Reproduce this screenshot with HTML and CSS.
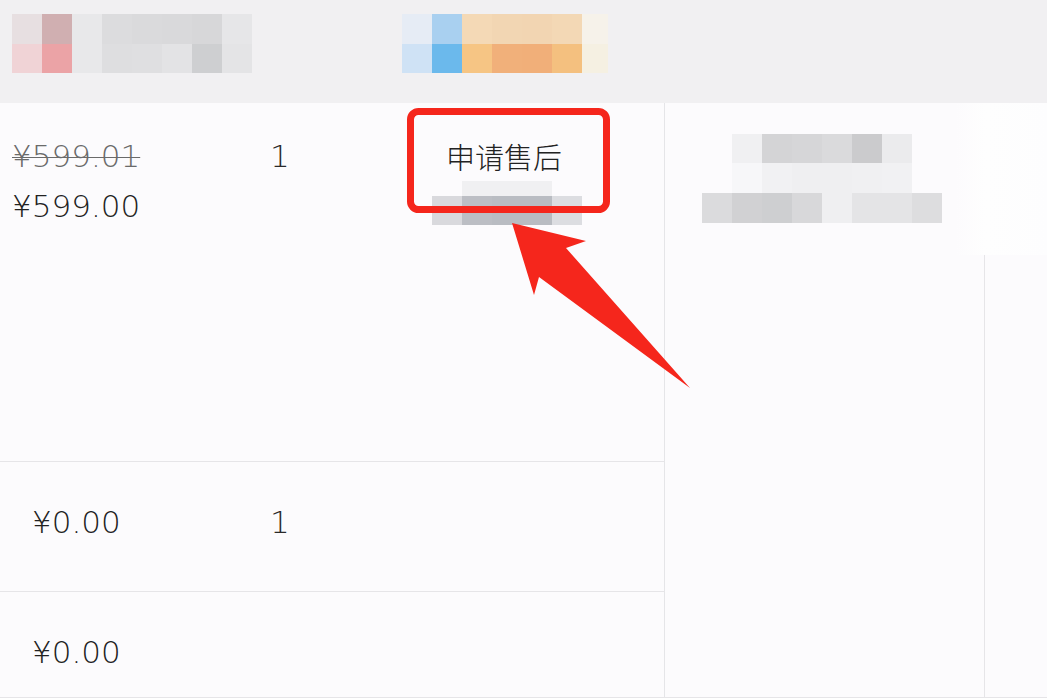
FILE: index.html
```html
<!DOCTYPE html>
<html lang="zh-CN">
<head>
<meta charset="utf-8">
<title>订单详情</title>
<link rel="stylesheet" href="styles.css">
</head>
<body>
<div class="page">
  <header class="header">
    <div class="mosaic m-left">
      <i class="h1"></i><i class="h2"></i><i class="h3"></i><i class="h4"></i><i class="h5"></i><i class="h6"></i><i class="h7"></i><i class="h8"></i>
      <i class="h9"></i><i class="h10"></i><i class="h11"></i><i class="h12"></i><i class="h13"></i><i class="h14"></i><i class="h15"></i><i class="h16"></i>
    </div>
    <div class="mosaic m-right">
      <i class="r1"></i><i class="r2"></i><i class="r3"></i><i class="r4"></i><i class="r5"></i><i class="r6"></i><i class="r7"></i>
      <i class="r8"></i><i class="r9"></i><i class="r10"></i><i class="r11"></i><i class="r12"></i><i class="r13"></i><i class="r14"></i>
    </div>
  </header>

  <main class="content">
    <section class="items">
      <div class="row row-main">
        <div class="price">
          <div class="old">¥599.01</div>
          <div class="now">¥599.00</div>
        </div>
        <div class="qty">1</div>
        <div class="action">
          <div class="action-text">申请售后</div>
          <div class="mosaic m-action">
            <i class="a0"></i><i class="a6"></i><i class="a6"></i><i class="a6"></i><i class="a0"></i>
            <i class="a1"></i><i class="a2"></i><i class="a3"></i><i class="a3"></i><i class="a4"></i>
          </div>
        </div>
      </div>
      <div class="row row-gift">
        <div class="price gift-price">¥0.00</div>
        <div class="qty">1</div>
        <div class="action"></div>
      </div>
      <div class="row row-gift row-last">
        <div class="price gift-price">¥0.00</div>
        <div class="qty"></div>
        <div class="action"></div>
      </div>
    </section>

    <aside class="side">
      <div class="side-top">
        <div class="mosaic m-side">
          <i></i><i class="s1"></i><i class="s2"></i><i class="s3"></i><i class="s4"></i><i class="s5"></i><i class="s6"></i><i></i>
          <i></i><i class="t0"></i><i class="t1"></i><i class="t2"></i><i class="t2"></i><i class="t3"></i><i class="t1"></i><i></i>
          <i class="u1"></i><i class="u2"></i><i class="u3"></i><i class="u4"></i><i class="u5"></i><i class="u6"></i><i class="u6"></i><i class="u7"></i>
        </div>
      </div>
      <div class="side-bottom">
        <div class="side-cell"></div>
      </div>
    </aside>
  </main>

  <svg class="annotation" width="1047" height="698" viewBox="0 0 1047 698" aria-hidden="true">
    <rect x="410.5" y="111.5" width="196" height="98" rx="8" ry="8" fill="none" stroke="#f5261c" stroke-width="7"/>
    <polygon points="512,223 586,241 566,248 690,388 539,277 534,295" fill="#f5261c"/>
  </svg>
</div>
</body>
</html>
```

FILE: styles.css
```css
html, body {
  margin: 0;
  padding: 0;
}

body {
  background: #fcfbfd;
  font-family: "DejaVu Sans", "Noto Sans CJK SC", sans-serif;
  color: #222;
}

.page {
  position: relative;
  width: 1047px;
  height: 698px;
  overflow: hidden;
}

/* ---------- header ---------- */
.header {
  height: 103px;
  box-sizing: border-box;
  background: #f1f0f2;
  display: flex;
  align-items: flex-start;
  padding: 14px 0 0 12px;
  gap: 150px;
}

.mosaic {
  display: grid;
}

.mosaic i {
  display: block;
}

.m-left {
  grid-template-columns: repeat(8, 30px);
  grid-template-rows: 30px 29px;
}

.m-right {
  grid-template-columns: repeat(6, 30px) 26px;
  grid-template-rows: 30px 29px;
}

.h1 { background: #e7dfe1; }
.h2 { background: #d0afb1; }
.h3 { background: #e8e8ea; }
.h4 { background: #dcdcde; }
.h5 { background: #dadadc; }
.h6 { background: #d9d9db; }
.h7 { background: #d7d7d9; }
.h8 { background: #e6e6e8; }
.h9 { background: #f0d3d6; }
.h10 { background: #eba3a6; }
.h11 { background: #e8e8ea; }
.h12 { background: #dedee0; }
.h13 { background: #dfdfe1; }
.h14 { background: #e3e3e5; }
.h15 { background: #cecfd1; }
.h16 { background: #e4e4e6; }

.r1 { background: #e6ecf5; }
.r2 { background: #a9d0f0; }
.r3 { background: #f4d9b6; }
.r4 { background: #f2d6b3; }
.r5 { background: #f2d5b2; }
.r6 { background: #f3d8b5; }
.r7 { background: #f6f2ea; }
.r8 { background: #cfe2f5; }
.r9 { background: #6bb9ec; }
.r10 { background: #f6c584; }
.r11 { background: #f1b07a; }
.r12 { background: #f1af79; }
.r13 { background: #f4c07f; }
.r14 { background: #f5f0e2; }

/* ---------- content ---------- */
.content {
  display: flex;
  height: 595px;
  box-sizing: border-box;
  border-bottom: 1px solid #e6e5e8;
}

.items {
  width: 665px;
  box-sizing: border-box;
  border-right: 1px solid #e5e5e8;
  display: flex;
  flex-direction: column;
}

.row {
  display: grid;
  grid-template-columns: 258px 105px 1fr;
  box-sizing: border-box;
  border-bottom: 1px solid #e6e5e8;
  font-size: 31px;
  font-weight: 200;
  line-height: 50px;
}

.row-main {
  height: 359px;
  padding: 28px 0 0 12px;
}

.row-gift {
  height: 130px;
  padding: 35px 0 0 32px;
  grid-template-columns: 238px 105px 1fr;
}

.row-last {
  flex: 1;
  border-bottom: none;
}

.price .old {
  color: #6a6a6a;
  text-decoration: line-through;
  text-decoration-thickness: 1px;
}

.price .now,
.gift-price {
  color: #222;
}

.qty {
  color: #2a2a2a;
}

.action {
  display: flex;
  flex-direction: column;
  align-items: center;
  width: 150px;
  margin-left: 57px;
}

.action-text {
  font-family: "Noto Sans CJK SC", sans-serif;
  font-weight: 300;
  font-size: 29px;
  line-height: 50px;
  white-space: nowrap;
  margin-left: -6px;
}

.m-action {
  grid-template-columns: repeat(5, 30px);
  grid-template-rows: 15px 29px;
}

.a0 { background: transparent; }
.a6 { background: #f0f0f2; }
.a1 { background: #d9d9dd; }
.a2 { background: #bcbec4; }
.a3 { background: #b9bcc2; }
.a4 { background: #dcdde1; }

/* ---------- side ---------- */
.side {
  flex: 1;
  display: flex;
  flex-direction: column;
}

.side-top {
  height: 152px;
  padding: 31px 0 0 37px;
  box-sizing: border-box;
  background: linear-gradient(90deg, #fcfbfd 0%, #fcfbfd 76%, #fefefe 84%, #fdfdfe 100%);
}

.m-side {
  grid-template-columns: repeat(8, 30px);
  grid-template-rows: 29px 30px 30px;
}

.s1 { background: #f0f0f2; }
.s2 { background: #d4d4d6; }
.s3 { background: #d6d6d8; }
.s4 { background: #dadadc; }
.s5 { background: #cbcbcd; }
.s6 { background: #ebebed; }
.t0 { background: #f7f7f9; }
.t1 { background: #f1f1f3; }
.t2 { background: #efeff1; }
.t3 { background: #f0f0f2; }
.u1 { background: #dbdbdd; }
.u2 { background: #d1d1d3; }
.u3 { background: #cecfd1; }
.u4 { background: #d8d8da; }
.u5 { background: #efeff1; }
.u6 { background: #e4e4e6; }
.u7 { background: #dddddf; }

.side-bottom {
  flex: 1;
  display: flex;
}

.side-cell {
  width: 320px;
  box-sizing: border-box;
  border-right: 1px solid #e6e5e8;
}

/* ---------- annotation overlay ---------- */
.annotation {
  position: absolute;
  left: 0;
  top: 0;
  pointer-events: none;
}
```
